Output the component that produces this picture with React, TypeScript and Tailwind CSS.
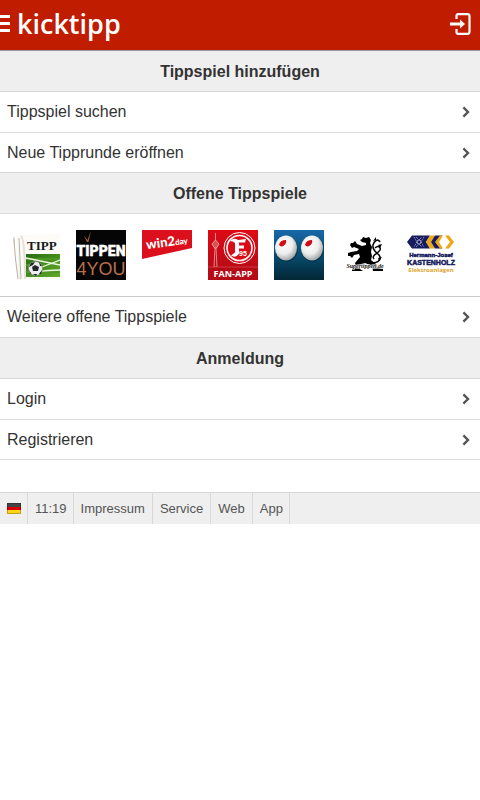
import type { ReactNode } from "react";

function Heading({ children }: { children: ReactNode }) {
  return (
    <h2 className="h-[41px] border-b border-[#d9d9d9] bg-[#efefef] text-center text-base font-bold leading-[42px]">
      {children}
    </h2>
  );
}

function MenuRow({ children }: { children: ReactNode }) {
  return (
    <li className="h-[41px] border-b border-[#d9d9d9] not-first:h-10">
      <a href="#" className="flex h-full items-center justify-between pl-[7px] pr-[10px] text-base leading-[42px]">
        {children}
        <svg viewBox="0 0 8 12" className="h-3 w-2" fill="none" stroke="#555" strokeWidth="2.4">
          <path d="M1.4 1.4 6 6 1.4 10.6" />
        </svg>
      </a>
    </li>
  );
}

function LoginIcon() {
  return (
    <svg viewBox="0 0 22 22" className="h-[22px] w-[22px]" fill="none" stroke="white" strokeWidth="2.2">
      <path d="M7.5 6V3q0-1.8 1.8-1.8h9.2q2 0 2 2v15.6q0 2-2 2H9.3q-1.8 0-1.8-1.8v-3" />
      <path d="M1 11h11" strokeWidth="3" />
      <path d="M11 6.5 16 11 11 15.5z" fill="white" stroke="none" />
    </svg>
  );
}

function TippLogo() {
  return (
    <svg viewBox="0 0 50 50" className="h-[50px] w-[50px]">
      <defs>
        <linearGradient id="paper" x1="0" x2="1">
          <stop offset="0" stopColor="#d2ccc2" />
          <stop offset="0.3" stopColor="#fff" />
          <stop offset="1" stopColor="#f3f0e8" />
        </linearGradient>
        <linearGradient id="grass" x1="0" y1="0" x2="1" y2="1">
          <stop offset="0" stopColor="#286c12" />
          <stop offset="1" stopColor="#61ac29" />
        </linearGradient>
      </defs>
      <path d="M4 7q3-3 7-2l39-1v45H8z" fill="#fcfbf7" />
      <path d="M3 8Q4 5 8 6l3 44H7Q5 28 3 8z" fill="url(#paper)" />
      <path d="M4 9Q5 29 8 49M9 8l2 41" stroke="#bbb3a8" strokeWidth="1" fill="none" />
      <path d="M11 6q4 4 4 43" stroke="#e6e1d7" strokeWidth="2" fill="none" />
      <text x="17" y="20" fontFamily="Liberation Serif, serif" fontSize="13" fontWeight="bold" fill="#17191b">TIPP</text>
      <path d="M16 24h34v23H16z" fill="url(#grass)" />
      <path d="M16 29h34M16 35h34M16 42h34" stroke="#4f9725" strokeWidth="2" />
      <path d="m16 28 34 7M25 42q14-2 25-2M32 37l18-7" stroke="#ecf6e2" strokeWidth="1.3" fill="none" />
      <circle cx="25.5" cy="38.5" r="7" fill="#eee" stroke="#777" strokeWidth=".6" />
      <path d="m25 35 4 2-1 4-5 0-1-4zM21 33l4-1-2 3-4 2zM29 32l3 4-2 0zM19 40l2 3 0 2zM29 44l3-4-1 4zM23 44l4 0-1 2z" fill="#20272b" />
      <path d="M16 47h34v2H16z" fill="#f8fbef" />
    </svg>
  );
}

function TippenLogo() {
  return (
    <svg viewBox="0 0 50 50" className="h-[50px] w-[50px]">
      <path d="M0 0h50v50H0z" fill="#050505" />
      <text x="25" y="26" textAnchor="middle" fontFamily="Roboto, sans-serif" fontSize="14" fontWeight="900" fill="white" stroke="white" strokeWidth=".4">
        TIPPEN
      </text>
      <path d="m8 6 3.5 4L15 1l-2.5 11h-1.500z" fill="#a85c36" />
      <text x="25" y="45" textAnchor="middle" fontFamily="Liberation Sans, sans-serif" fontSize="18" fill="#b86e4c">
        4YOU
      </text>
    </svg>
  );
}

function WinLogo() {
  return (
    <svg viewBox="0 0 50 50" className="h-[50px] w-[50px]">
      <path d="M0 0h50v18L0 29z" fill="#dc101c" />
      <text transform="rotate(-8 6 20)" x="5" y="19" fontFamily="Lato, sans-serif" fontSize="13" fontWeight="900" fill="white">
        win2<tspan fontSize="8">day</tspan>
      </text>
    </svg>
  );
}

function FanAppLogo() {
  return (
    <svg viewBox="0 0 50 50" className="h-[50px] w-[50px]">
      <defs>
        <linearGradient id="fan" x1="0" y1="0" x2="0" y2="1">
          <stop offset="0" stopColor="#df0916" />
          <stop offset="1" stopColor="#ad0b15" />
        </linearGradient>
      </defs>
      <path d="M0 0h50v50H0z" fill="url(#fan)" />
      <path d="M7.500 3v8M6 37l1-19h1l1 19z" stroke="#e9a8a6" strokeWidth=".8" fill="none" />
      <path d="m4 14 3.500-4 3.500 4-2.500 4h-2z" fill="#d95050" stroke="#efb4b0" strokeWidth=".8" />
      <circle cx="31.500" cy="18" r="15.500" fill="#d90d18" stroke="white" strokeWidth="1" />
      <circle cx="31.500" cy="18" r="12.500" fill="none" stroke="white" strokeWidth="1.600" />
      <path d="M22 11q4-4 8-1l8-1-1 3.500h-6v3h5v3h-5v5q-3 5-8 2l4-3V13q-2-2-5-2z" fill="white" />
      <text x="31" y="26" fontFamily="Liberation Sans, sans-serif" fontSize="7" fontWeight="bold" fill="white">95</text>
      <path d="M0 37h50v13H0z" fill="#b60b16" />
      <path d="M0 37h50" stroke="#db4e54" strokeWidth=".7" />
      <text x="25" y="47" textAnchor="middle" fontFamily="Open Sans, sans-serif" fontSize="9" fontWeight="bold" fill="white">FAN-APP</text>
    </svg>
  );
}

function EyesLogo() {
  return (
    <svg viewBox="0 0 50 50" className="h-[50px] w-[50px]">
      <defs>
        <linearGradient id="night" x1="0" y1="0" x2="0" y2="1">
          <stop offset="0" stopColor="#1769a8" />
          <stop offset=".55" stopColor="#07496b" />
          <stop offset="1" stopColor="#032634" />
        </linearGradient>
        <radialGradient id="eye" cx=".4" cy=".35" r=".65">
          <stop offset="0" stopColor="#fff" />
          <stop offset=".6" stopColor="#eee" />
          <stop offset="1" stopColor="#a5a9ab" />
        </radialGradient>
      </defs>
      <path d="M0 0h50v50H0z" fill="url(#night)" />
      <ellipse cx="12.5" cy="18.8" rx="11.4" ry="12.9" fill="#05283b" opacity=".6" />
      <ellipse cx="38.5" cy="18.8" rx="11.4" ry="12.9" fill="#05283b" opacity=".6" />
      <ellipse cx="12" cy="18" rx="11" ry="12.5" fill="url(#eye)" />
      <ellipse cx="38" cy="18" rx="11" ry="12.5" fill="url(#eye)" />
      <path d="M5 15q1-5 7-5 1 3-2 5.500-3 2-5-.500zM31 15q1-5 7-5 1 3-2 5.500-3 2-5-.500z" fill="#d40b16" />
    </svg>
  );
}

function LionLogo() {
  return (
    <svg viewBox="0 0 50 50" className="h-[50px] w-[50px]">
      <path d="m20 10 2-1 1-2 3 1 3-1 2 3-1 3 2 4-1 5 1 4-1 4 5 4 2 4 5 1 0 2H33l-1-5-7-3-5 3 0 3 3 2H12l0-3 4-1-1-4 5-6-1-3-5 1-2 3-2-2-2 0 0-3 3-1 6-1 2-2-5-2-2 1-2-3 1-2 2 0 2-2 2 3 5 2 4-1 0-2-4-1z" fill="black" />
      <path d="M31 33c8 0 11-4 8-8-3-3-7-5-6-10 1-4 5-7 7-3M34 29c-3-4 4-5 6-9 1-3-2-5-5-2" fill="none" stroke="black" strokeWidth="1.5" />
      <path d="m33 11 3-4 0 3zM38 15l4-1-2 4zM38 28l4-1-3 4z" fill="black" />
      <text x="25" y="38" textAnchor="middle" fontFamily="Liberation Serif, serif" fontSize="6" fontStyle="italic" fontWeight="bold" fill="#222" stroke="white" strokeWidth="1.2" paintOrder="stroke">Supertippen.de</text>
    </svg>
  );
}

function KastenholzLogo() {
  return (
    <svg viewBox="0 0 50 50" className="h-[50px] w-[50px]">
      <path d="m1 12 5-6.500h18L20 12l4 6.500H6z" fill="#171c60" />
      <path d="M24 5.500h5L25 12l4 6.500h-5L20 12z" fill="#eda814" />
      <path d="M29 5.500h7L32 12l4 6.500h-7L25 12z" fill="#171c60" />
      <path d="M34 5.500h3L33 12l4 6.500h-3L29 12z" fill="#eda814" />
      <path d="M39 5.500h4l5 6.500-5 6.500h-4L44 12z" fill="#eda814" />
      <path d="m8 7 3 5-3 5M18 7l-3 5 3 5M10 7l3 3 3-3M10 17l3-3 3 3" stroke="#d1d0ee" strokeWidth=".8" fill="none" strokeDasharray="1 1" />
      <circle cx="13" cy="12" r="2" fill="none" stroke="white" strokeWidth=".6" />
      <text x="25" y="27" textAnchor="middle" fontFamily="Liberation Sans, sans-serif" fontSize="6" fontWeight="bold" fill="#171c60" stroke="#171c60" strokeWidth=".5">Hermann-Josef</text>
      <text x="25" y="35" textAnchor="middle" fontFamily="Liberation Sans, sans-serif" fontSize="7" fontWeight="bold" fill="#171c60" stroke="#171c60" strokeWidth=".5">KASTENHOLZ</text>
      <text x="25" y="42" textAnchor="middle" fontFamily="Open Sans, sans-serif" fontSize="6" fontWeight="bold" fill="#dda52d">Elektroanlagen</text>
    </svg>
  );
}

const games = [
  { name: "Tipp", Logo: TippLogo },
  { name: "Tippen4You", Logo: TippenLogo },
  { name: "win2day", Logo: WinLogo },
  { name: "Fan-App", Logo: FanAppLogo },
  { name: "Eyes", Logo: EyesLogo },
  { name: "Supertippen", Logo: LionLogo },
  { name: "Kastenholz", Logo: KastenholzLogo },
];

export default function App() {
  return (
    <div className="bg-white font-['Liberation_Sans',Arial,sans-serif] text-[#333]">
      <header className="flex h-[51px] items-center justify-between border-b border-[#999] bg-[#c01d00] pb-[3px] pr-[9px]">
        <div className="flex items-center gap-[7px]">
          <button aria-label="Menü" className="flex w-[10px] flex-col gap-1">
            <span className="h-[3px] w-full bg-white" />
            <span className="h-[3px] w-full bg-white" />
            <span className="h-[3px] w-full bg-white" />
          </button>
          <a href="#" className="font-['Open_Sans',sans-serif] text-[27px] font-semibold leading-10 text-white">
            kicktipp
          </a>
        </div>
        <a href="#login" aria-label="Login">
          <LoginIcon />
        </a>
      </header>

      <main>
        <Heading>Tippspiel hinzufügen</Heading>
        <ul>
          <MenuRow>Tippspiel suchen</MenuRow>
          <MenuRow>Neue Tipprunde eröffnen</MenuRow>
        </ul>

        <Heading>Offene Tippspiele</Heading>
        <div className="flex flex-wrap gap-4 border-b border-[#ccc] px-[10px] py-4">
          {games.map(({ name, Logo }) => (
            <a key={name} href="#" aria-label={name}>
              <Logo />
            </a>
          ))}
        </div>
        <ul>
          <MenuRow>Weitere offene Tippspiele</MenuRow>
        </ul>

        <Heading>Anmeldung</Heading>
        <ul>
          <MenuRow>Login</MenuRow>
          <MenuRow>Registrieren</MenuRow>
        </ul>
      </main>

      <footer className="mt-8 flex h-8 border-t border-[#d9d9d9] bg-[#efefef] text-[13px] leading-8 text-[#555]">
        <a href="#" aria-label="Deutsch" className="flex items-center border-r border-[#d9d9d9] pl-[7px] pr-[6px]">
          <svg viewBox="0 0 14 11" className="h-[11px] w-[14px]">
            <path d="M0 0h14v4H0z" fill="#444" />
            <path d="M0 4h14v3H0z" fill="#dc0000" />
            <path d="M0 7h14v4H0z" fill="#ffd51c" />
            <path d="M.5 .5h13v10H.5z" fill="none" stroke="#000" strokeOpacity=".25" />
          </svg>
        </a>
        <span className="border-r border-[#d9d9d9] pl-[7px] pr-[6px]">11:19</span>
        <a href="#" className="border-r border-[#d9d9d9] px-[7px]">Impressum</a>
        <a href="#" className="border-r border-[#d9d9d9] px-[7px]">Service</a>
        <a href="#" className="border-r border-[#d9d9d9] px-[7px]">Web</a>
        <a href="#" className="border-r border-[#d9d9d9] pl-[7px] pr-[6px]">App</a>
      </footer>
    </div>
  );
}
